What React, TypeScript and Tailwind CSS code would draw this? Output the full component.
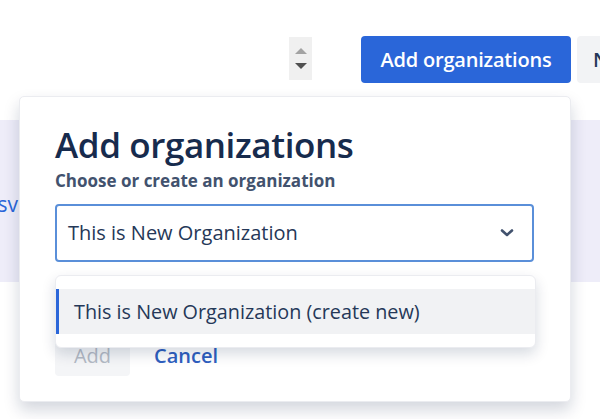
import React from "react";

const font = { fontFamily: '"Open Sans", "Noto Sans", sans-serif' };

const App = () => {
  return (
    <div className="relative h-[419px] w-[600px] overflow-hidden bg-white" style={font}>
      {/* Toolbar */}
      <div className="flex h-[120px] items-start pt-9">
        <div className="ml-[289px] mt-[1px] flex h-[43px] w-[23px] shrink-0 flex-col items-center justify-center gap-[9px] bg-[#f0f0f0]">
          <div className="h-0 w-0 border-x-[6px] border-b-[6px] border-x-transparent border-b-[#a3a3a3]" />
          <div className="h-0 w-0 border-x-[6px] border-t-[6px] border-x-transparent border-t-[#505050]" />
        </div>
        <button className="ml-[49px] flex h-[47px] w-[210px] shrink-0 items-center justify-center rounded-[4px] bg-[#2a66d9] text-[20px] font-semibold tracking-[-0.2px] text-white">
          Add organizations
        </button>
        <button className="ml-[6px] flex h-[47px] w-[80px] shrink-0 items-center rounded-[4px] bg-[#f2f3f5] pl-[16px] text-[20px] font-semibold text-[#253858]">
          New
        </button>
      </div>

      {/* Content band behind the dialog */}
      <div className="flex h-[162px] items-center bg-[#eeedf9] pt-[8px]">
        <span className="-ml-[18px] text-[21px] text-[#2a66d9]">.csv</span>
      </div>

      {/* Dialog */}
      <div className="absolute left-[19px] top-[96px] h-[306px] w-[552px] rounded-[5px] border border-[#ebecf0] bg-white pl-[35px] pt-[26px] shadow-[0_8px_16px_rgba(9,30,66,0.18)]">
        <h2 className="text-[35px] font-semibold leading-[44px] tracking-[-0.4px] text-[#172b4d]">
          Add organizations
        </h2>
        <div className="mt-[4px] text-[17px] font-bold leading-[20px] text-[#42526e]">
          Choose or create an organization
        </div>
        <div className="mt-[13px] flex h-[58px] w-[479px] items-center justify-between rounded-[4px] border-2 border-[#5a8fd9] pl-[11px] pr-[18px]">
          <span className="text-[20px] text-[#253858]">This is New Organization</span>
          <svg width="14" height="10" viewBox="0 0 14 10" fill="none">
            <path d="M2 2.5 L7 7 L12 2.5" stroke="#42526e" strokeWidth="2.6" strokeLinecap="round" strokeLinejoin="round" />
          </svg>
        </div>
        <div className="mt-[73px] flex items-center gap-[24px]">
          <button className="flex h-[41px] w-[75px] items-center justify-center rounded-[4px] bg-[#f4f5f7] text-[20px] font-medium text-[#b3bac5]">
            Add
          </button>
          <button className="text-[20px] font-semibold text-[#2f5fbf]">Cancel</button>
        </div>

        {/* Dropdown menu */}
        <div className="absolute left-[35px] top-[178px] w-[481px] rounded-[6px] border border-[#ebecf0] bg-white py-[13px] shadow-[0_6px_14px_rgba(9,30,66,0.16)]">
          <div className="flex h-[45px] items-center border-l-[3px] border-[#2a66d9] bg-[#f1f2f4] pl-[15px] text-[19.8px] text-[#253858]">
            This is New Organization (create new)
          </div>
        </div>
      </div>
    </div>
  );
};

export default App;
